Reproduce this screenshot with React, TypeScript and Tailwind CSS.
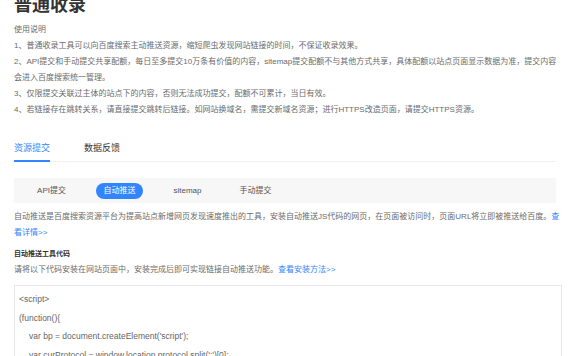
import React, { useState } from "react";

const subTabs = ["API提交", "自动推送", "sitemap", "手动提交"];

const rules = [
  "1、普通收录工具可以向百度搜索主动推送资源，缩短爬虫发现网站链接的时间，不保证收录效果。",
  "2、API提交和手动提交共享配额，每日至多提交10万条有价值的内容，sitemap提交配额不与其他方式共享，具体配额以站点页面显示数据为准，提交内容会进入百度搜索统一管理。",
  "3、仅限提交关联过主体的站点下的内容，否则无法成功提交，配额不可累计，当日有效。",
  "4、若链接存在跳转关系，请直接提交跳转后链接。如网站换域名，需提交新域名资源；进行HTTPS改造页面，请提交HTTPS资源。",
];

const codeLines = [
  { text: "<script>", indent: false },
  { text: "(function(){", indent: false },
  { text: "var bp = document.createElement('script');", indent: true },
  { text: "var curProtocol = window.location.protocol.split(':')[0];", indent: true },
  { text: "if (curProtocol === 'https') {", indent: true },
];

const App: React.FC = () => {
  const [mainTab, setMainTab] = useState(0);
  const [subTab, setSubTab] = useState(1);

  return (
    <div
      className="w-[576px] h-[356px] overflow-hidden bg-white px-[14px] text-[#6b6b6b]"
      style={{ fontFamily: '"Liberation Sans", "Noto Sans CJK SC", sans-serif' }}
    >
      {/* 标题 */}
      <h1 className="mt-[-4px] text-[18px] leading-[18px] font-bold text-[#333]">
        普通收录
      </h1>

      {/* 使用说明 */}
      <div className="mt-[8px] text-[8px] leading-[16px]">
        <p>使用说明</p>
        {rules.map((r, i) => (
          <p key={`rule-${i}`}>{r}</p>
        ))}
      </div>

      {/* 主标签 */}
      <div className="mt-[24px] mr-[6px] flex gap-[34px] border-b border-[#f0f0f0]">
        {["资源提交", "数据反馈"].map((t, i) => (
          <button
            key={t}
            onClick={() => setMainTab(i)}
            className={`pb-[6px] text-[9px] leading-[12px] border-b-2 -mb-px ${
              mainTab === i
                ? "text-[#3385ff] border-[#3385ff]"
                : "text-[#333] border-transparent"
            }`}
          >
            {t}
          </button>
        ))}
      </div>

      {/* 子标签 */}
      <div className="mt-[16px] mr-[6px] h-[25px] bg-[#f7f7f7] flex items-center pl-[14px] gap-[21px]">
        {subTabs.map((t, i) => (
          <button
            key={t}
            onClick={() => setSubTab(i)}
            className={`w-[47px] h-[16px] rounded-full text-[8px] leading-[16px] text-center ${
              subTab === i ? "bg-[#3385ff] text-white" : "text-[#555]"
            }`}
          >
            {t}
          </button>
        ))}
      </div>

      {/* 说明 */}
      <p className="mt-[6px] text-[8px] leading-[16px]">
        自动推送是百度搜索资源平台为提高站点新增网页发现速度推出的工具，安装自动推送JS代码的网页，在页面被访问时，页面URL将立即被推送给百度。
        <span className="text-[#3385ff]">查看详情&gt;&gt;</span>
      </p>

      <h3 className="mt-[5px] text-[7px] leading-[16px] font-bold text-[#333]">
        自动推送工具代码
      </h3>
      <p className="text-[8px] leading-[16px]">
        请将以下代码安装在网站页面中，安装完成后即可实现链接自动推送功能。
        <span className="text-[#3385ff]">查看安装方法&gt;&gt;</span>
      </p>

      {/* 代码 */}
      <div className="mt-[7px] border border-[#e8e8e8] pt-[4px] px-[4px] text-[8.5px] leading-[18.5px] text-[#666]">
        {codeLines.map((l, i) => (
          <div key={`code-${i}`} className={l.indent ? "pl-[10px]" : ""}>
            {l.text}
          </div>
        ))}
      </div>
    </div>
  );
};

export default App;
